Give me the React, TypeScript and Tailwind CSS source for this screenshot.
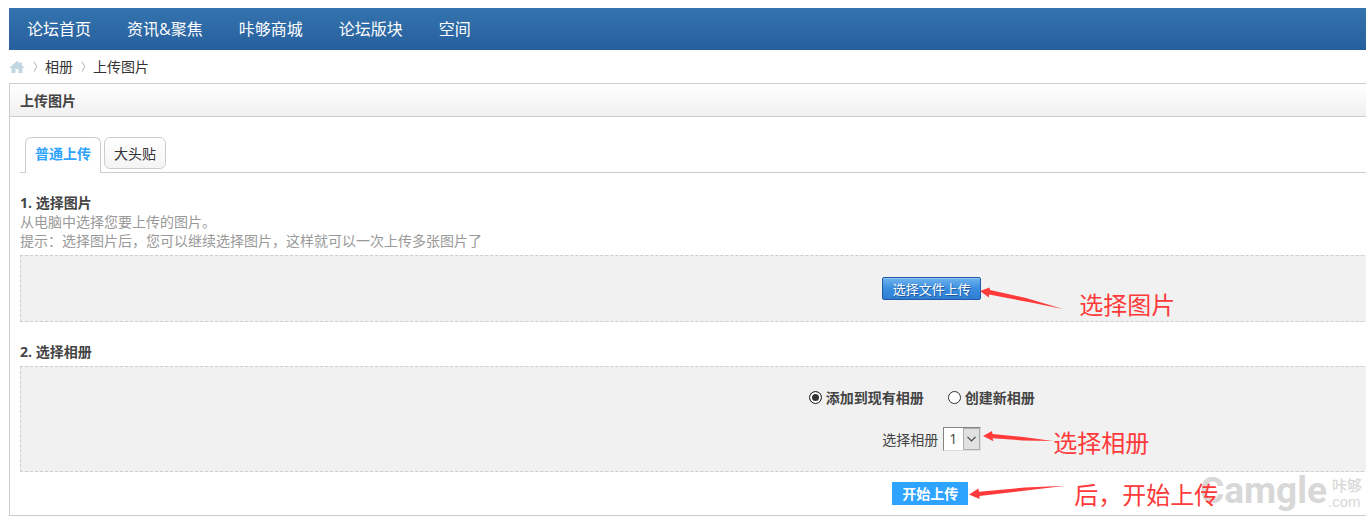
import React from "react";

const navItems = ["论坛首页", "资讯&聚焦", "咔够商城", "论坛版块", "空间"];

function Crumb({ children }: { children: React.ReactNode }) {
  return (
    <li className="flex items-center">
      <svg viewBox="0 0 5 11" className="mr-[7px] ml-2 h-[11px] w-[5px]" fill="none" stroke="#b0b0b0" aria-hidden="true">
        <path d="M1 .5 L3.8 5.5 L1 10.5" />
      </svg>
      {children}
    </li>
  );
}

function Note({ className, children }: { className: string; children: React.ReactNode }) {
  return (
    <span className={"pointer-events-none absolute left-full flex text-2xl leading-8 font-normal whitespace-nowrap text-[#ff3a3a] " + className}>
      {children}
    </span>
  );
}

export default function App() {
  return (
    <div className="relative overflow-x-clip bg-white pt-2 pl-[9px] font-['Open_Sans','Noto_Sans_CJK_SC',sans-serif] text-sm leading-[19px] text-[#444]">
      <div className="w-[136%]">
        <nav className="flex h-[42px] items-center bg-linear-to-b from-[#3474ae] to-[#275f9d] text-base text-white">
          {navItems.map((item) => (
            <a key={item} href="#" className="px-[18px]">
              {item}
            </a>
          ))}
        </nav>

        <ol className="flex h-[33px] items-center text-[#333]">
          <li>
            <a href="#" aria-label="首页">
              <svg viewBox="0 0 16 12" className="h-3 w-4" fill="#c2d5e3" aria-hidden="true">
                <path d="M8 0 L11 2.6 V1.5 H13 V4.4 L16 7 H13.5 V12 H9.5 V8 H6.5 V12 H2.5 V7 H0 Z" />
              </svg>
            </a>
          </li>
          <Crumb>
            <a href="#">相册</a>
          </Crumb>
          <Crumb>上传图片</Crumb>
        </ol>

        <main className="relative border border-[#cdcdcd] pb-2.5">
          <h1 className="flex h-[33px] items-center border-b border-[#cdcdcd] bg-linear-to-b from-white to-[#f0f0f0] px-2.5 font-bold">
            上传图片
          </h1>

          <div className="px-2.5 pt-5">
            <div className="flex h-9 items-start gap-[3px] border-b border-[#cdcdcd] pl-[5px]">
              <a href="#" className="flex h-9 items-start rounded-t-md border border-b-0 border-[#cdcdcd] bg-white px-[9px] pt-1.5 font-bold text-[#2ea3ff]">
                普通上传
              </a>
              <a href="#" className="flex h-8 items-start rounded-md border border-[#cdcdcd] bg-linear-to-b from-white to-[#f4f4f4] px-[9px] pt-1.5 text-[#333]">
                大头贴
              </a>
            </div>

            <section className="pt-5">
              <h2 className="font-bold">1. 选择图片</h2>
              <p className="text-[#999]">从电脑中选择您要上传的图片。</p>
              <p className="text-[#999]">提示：选择图片后，您可以继续选择图片，这样就可以一次上传多张图片了</p>
              <div className="mt-[5px] flex justify-center border border-dashed border-[#cdcdcd] bg-[#f1f1f1] py-[21px]">
                <div className="relative">
                  <button
                    type="button"
                    className="block h-[23px] w-[99px] rounded-xs border border-[#1f5ba8] bg-linear-to-b from-[#6db3ee] via-[#3b8ede] to-[#2f7dd2] text-[13px] leading-5 text-white inset-shadow-[0_1px_0_#8cc4f2] text-shadow-[1px_1px_0_#1f5c9f]"
                  >
                    选择文件上传
                  </button>
                  <Note className="top-3 gap-4">
                    <svg viewBox="0 0 82 24" className="h-6 w-[82px] overflow-visible" fill="#ff3a3a" aria-hidden="true">
                      <path d="M-1 2 L8.5 -1.5 L9 1 L45 9 L82 20 L50 13.5 L8 5.5 L8 8.5 Z" />
                    </svg>
                    选择图片
                  </Note>
                </div>
              </div>
            </section>

            <section className="pt-5">
              <h2 className="font-bold">2. 选择相册</h2>
              <div className="mt-[5px] flex flex-col items-center border border-dashed border-[#cdcdcd] bg-[#f1f1f1] py-5">
                <div className="mr-5 flex h-5 gap-6 font-bold">
                  <label className="flex items-center gap-1">
                    <input
                      type="radio"
                      name="mode"
                      defaultChecked
                      className="size-[13px] appearance-none rounded-full border border-[#333] bg-white checked:bg-[#333] checked:inset-shadow-[0_0_0_2px_#fff]"
                    />
                    添加到现有相册
                  </label>
                  <label className="flex items-center gap-1">
                    <input
                      type="radio"
                      name="mode"
                      className="size-[13px] appearance-none rounded-full border border-[#333] bg-white checked:bg-[#333] checked:inset-shadow-[0_0_0_2px_#fff]"
                    />
                    创建新相册
                  </label>
                </div>
                <div className="relative mt-5 flex items-center gap-[5px]">
                  <label htmlFor="album">选择相册</label>
                  <span className="relative flex">
                    <select
                      id="album"
                      defaultValue="1"
                      className="h-6 w-[38px] appearance-none border border-[#848484] border-r-[#ddd] border-b-[#ddd] bg-white pl-[5px] text-sm leading-5"
                    >
                      <option value="1">1</option>
                    </select>
                    <span className="pointer-events-none absolute inset-y-px right-px flex w-[17px] items-center justify-center border border-[#adadad] bg-[#e1e1e1]">
                      <svg viewBox="0 0 9 6" className="h-1.5 w-[9px]" fill="none" stroke="#444" strokeWidth="1.2" aria-hidden="true">
                        <path d="M.5 .8 L4.5 4.8 L8.5 .8" />
                      </svg>
                    </span>
                  </span>
                  <Note className="top-0 pl-0.5">
                    <svg viewBox="0 0 70 20" className="h-5 w-[70px]" fill="#ff3a3a" aria-hidden="true">
                      <path d="M0 9 L9 4 L9.5 7 L40 10 L70 14 L40 13.5 L9.5 11.2 L10.5 14.2 Z" />
                    </svg>
                    选择相册
                  </Note>
                </div>
              </div>
            </section>

            <div className="mr-[3px] flex justify-center pt-2.5">
              <div className="relative z-10">
                <button type="submit" className="block h-[23px] bg-[#2ea3ff] px-2.5 font-bold text-white">
                  开始上传
                </button>
                <Note className="-top-[3px] gap-2 pl-0.5">
                  <svg viewBox="0 0 96 24" className="h-6 w-24 overflow-visible" fill="#ff3a3a" aria-hidden="true">
                    <path d="M-1 15.5 L8.5 9.5 L9 12.8 L55 8.5 L96 6.8 L60 11 L9.5 17 L9.5 20 Z" />
                  </svg>
                  后，开始上传
                </Note>
              </div>
            </div>
          </div>
        </main>
      </div>

      <div className="absolute right-1 bottom-0 flex items-start gap-px text-[#d8d8d8]" aria-hidden="true">
        <span className="font-['Roboto',sans-serif] text-[37px] leading-[50px] font-bold">Camgle</span>
        <span className="flex flex-col pt-3 font-['Liberation_Sans','Noto_Sans_CJK_SC',sans-serif] font-medium">
          <span className="pl-1 text-[15px] leading-4">咔够</span>
          <span className="text-[15px] leading-4">.com</span>
        </span>
      </div>
    </div>
  );
}
